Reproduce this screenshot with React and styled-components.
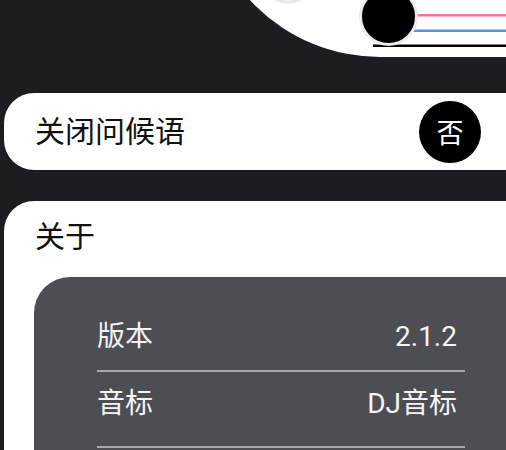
import React from "react";
import styled, { createGlobalStyle } from "styled-components";

const Global = createGlobalStyle`
  html, body { margin: 0; padding: 0; background: #1b1d21; }
  body { font-family: Roboto, "Noto Sans CJK SC", sans-serif; overflow: hidden; }
`;

const Page = styled.div`
  width: 506px;
  height: 450px;
  overflow: hidden;
  background: #1b1d21;
  display: flex;
  flex-direction: column;
`;

const Header = styled.div`
  align-self: flex-end;
  width: 303px;
  height: 200px;
  margin-top: -143px;
  flex-shrink: 0;
  background: #ffffff;
  border-bottom-left-radius: 177px;
  display: flex;
  flex-direction: column;
  justify-content: flex-end;
  overflow: hidden;
`;

const Wave = styled.svg`
  display: block;
  width: 303px;
  height: 80px;
`;

const SettingCard = styled.div`
  margin: 36px 0 0 4px;
  height: 77px;
  flex-shrink: 0;
  background: #ffffff;
  border-radius: 30px 0 0 30px;
  box-shadow: 0 1px 1px rgba(0, 0, 0, 0.35);
  display: flex;
  align-items: center;
  justify-content: space-between;
  padding: 0 25px 0 31px;
`;

const Label = styled.span`
  font-size: 30px;
  color: #111;
  line-height: 40px;
`;

const ToggleButton = styled.div`
  width: 62px;
  height: 62px;
  border-radius: 50%;
  background: #000;
  color: #fff;
  font-size: 27px;
  display: flex;
  align-items: center;
  justify-content: center;
`;

const AboutCard = styled.div`
  margin: 31px 0 0 4px;
  flex: 1;
  background: #ffffff;
  border-top-left-radius: 30px;
  padding-top: 16px;
  display: flex;
  flex-direction: column;
`;

const Title = styled.div`
  font-size: 30px;
  line-height: 40px;
  color: #111;
  padding-left: 31px;
`;

const InfoPanel = styled.div`
  margin: 20px 0 0 30px;
  flex: 1;
  background: #4d4e53;
  border-top-left-radius: 36px;
  padding: 28px 41px 0 63px;
`;

const InfoRow = styled.div`
  display: flex;
  justify-content: space-between;
  align-items: center;
  padding: 12px 8px ${(p) => p.$pb}px 0;
  border-bottom: 2px solid #a8a8a8;
  font-size: 28px;
  line-height: 40px;
  color: #f4f4f4;
`;

export default function App() {
  return (
    <Page>
      <Global />
      <Header>
        <Wave viewBox="0 0 303 80">
          <circle cx="85" cy="-3" r="28" fill="#fff" stroke="#e8e8e8" strokeWidth="3" />
          <rect x="200" y="37" width="103" height="2.5" fill="#ff6f9c" />
          <rect x="200" y="52.5" width="103" height="2.5" fill="#4e8ff0" />
          <rect x="170" y="67.5" width="133" height="2.5" fill="#000" />
          <circle cx="185.5" cy="39.5" r="28" fill="#000" stroke="#ececec" strokeWidth="3" />
        </Wave>
      </Header>
      <SettingCard>
        <Label>关闭问候语</Label>
        <ToggleButton>否</ToggleButton>
      </SettingCard>
      <AboutCard>
        <Title>关于</Title>
        <InfoPanel>
          <InfoRow $pb={13}>
            <span>版本</span>
            <span>2.1.2</span>
          </InfoRow>
          <InfoRow $pb={22}>
            <span>音标</span>
            <span>DJ音标</span>
          </InfoRow>
        </InfoPanel>
      </AboutCard>
    </Page>
  );
}
